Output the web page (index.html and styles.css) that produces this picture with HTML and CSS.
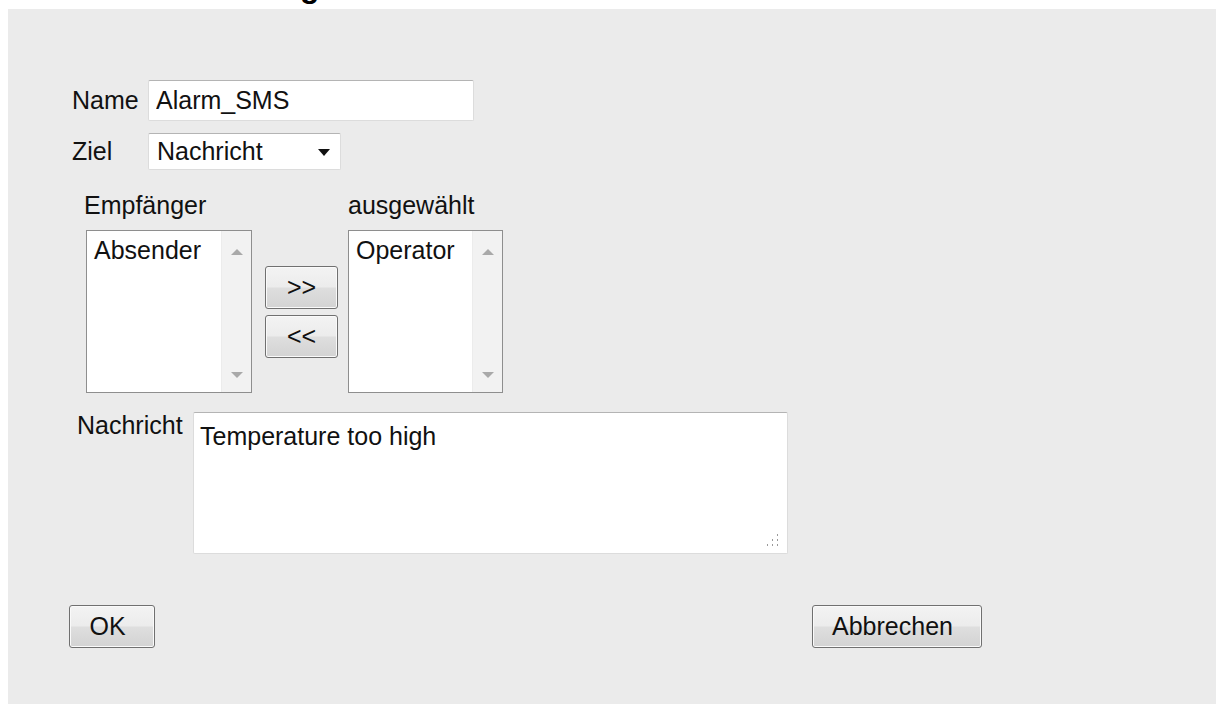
FILE: index.html
```html
<!DOCTYPE html>
<html lang="de">
<head>
<meta charset="utf-8">
<title>Alarmierung</title>
<link rel="stylesheet" href="styles.css">
</head>
<body>
<header class="title">
  <h1>Alarmierung</h1>
</header>

<main class="panel">
  <form class="dialog">
    <div class="fields">
      <label class="field-label" for="name">Name</label>
      <input class="text-input" id="name" type="text" value="Alarm_SMS">

      <label class="field-label" for="ziel">Ziel</label>
      <div class="select-box" id="ziel">
        <span class="select-value">Nachricht</span>
        <svg class="select-arrow" width="12" height="7" viewBox="0 0 12 7"><path d="M0 0h12L6 7z" fill="#111"/></svg>
      </div>
    </div>

    <div class="transfer">
      <span class="pane-label pane-label-source">Empfänger</span>
      <span class="pane-label pane-label-target">ausgewählt</span>

      <div class="listbox listbox-source">
        <ul class="list-items">
          <li>Absender</li>
        </ul>
        <div class="scroll-track">
          <svg width="12" height="6" viewBox="0 0 12 6"><path d="M0 6L6 0l6 6z" fill="#a9a9a9"/></svg>
          <svg width="12" height="6" viewBox="0 0 12 6"><path d="M0 0h12L6 6z" fill="#a9a9a9"/></svg>
        </div>
      </div>

      <div class="shuttle">
        <button type="button" class="btn btn-shuttle">&gt;&gt;</button>
        <button type="button" class="btn btn-shuttle">&lt;&lt;</button>
      </div>

      <div class="listbox listbox-target">
        <ul class="list-items">
          <li>Operator</li>
        </ul>
        <div class="scroll-track">
          <svg width="12" height="6" viewBox="0 0 12 6"><path d="M0 6L6 0l6 6z" fill="#a9a9a9"/></svg>
          <svg width="12" height="6" viewBox="0 0 12 6"><path d="M0 0h12L6 6z" fill="#a9a9a9"/></svg>
        </div>
      </div>
    </div>

    <div class="message-row">
      <label class="message-label" for="nachricht">Nachricht</label>
      <div class="textarea-wrap">
        <textarea class="message-input" id="nachricht">Temperature too high</textarea>
        <svg class="resize-grip" width="14" height="15" viewBox="0 0 14 15">
          <g fill="#9a9a9a">
            <rect x="12" y="1" width="1" height="2"/>
            <rect x="7" y="6" width="1" height="2"/>
            <rect x="12" y="6" width="1" height="2"/>
            <rect x="2" y="11" width="1" height="2"/>
            <rect x="7" y="11" width="1" height="2"/>
            <rect x="12" y="11" width="1" height="2"/>
          </g>
        </svg>
      </div>
    </div>

    <div class="actions">
      <button type="button" class="btn btn-action btn-ok">OK</button>
      <button type="button" class="btn btn-action btn-cancel">Abbrechen</button>
    </div>
  </form>
</main>
</body>
</html>
```

FILE: styles.css
```css
html,
body {
  margin: 0;
  background: #ffffff;
}

body {
  font-family: "Liberation Sans", Arial, sans-serif;
  font-size: 25px;
  line-height: 29px;
  color: #111111;
}

/* Page heading: only its descenders reach into the window */
.title {
  height: 9px;
  overflow: hidden;
}

.title h1 {
  margin: -30px 0 0 131px;
  font-size: 32px;
  line-height: 32px;
  font-weight: bold;
  color: #000000;
}

/* Grey dialog surface */
.panel {
  margin-left: 8px;
  min-height: 695px;
  background: #ebebeb;
  padding-top: 71px;
  box-sizing: border-box;
}

.dialog {
  margin: 0;
}

/* Name / Ziel */
.fields {
  display: grid;
  grid-template-columns: 76px auto;
  row-gap: 12px;
  align-items: center;
  justify-content: start;
  margin-left: 64px;
}

.field-label {
  white-space: nowrap;
}

.text-input,
.select-box,
.message-input {
  box-sizing: border-box;
  background: #ffffff;
  border: 1px solid #dcdcdc;
  border-top-color: #b4b4b4;
  border-radius: 2px;
  font: inherit;
  color: #111111;
}

.text-input {
  width: 326px;
  height: 41px;
  padding: 0 7px;
  margin: 0;
  outline: none;
}

.select-box {
  position: relative;
  width: 193px;
  height: 37px;
  padding: 0 8px;
  display: flex;
  align-items: center;
}

.select-arrow {
  position: absolute;
  right: 10px;
  top: 15px;
}

/* Empfänger / ausgewählt transfer lists */
.transfer {
  display: grid;
  grid-template-columns: 166px auto 155px;
  grid-template-rows: auto 163px;
  row-gap: 10px;
  justify-content: start;
  margin: 21px 0 0 78px;
}

.pane-label {
  grid-row: 1;
  white-space: nowrap;
}

.pane-label-source {
  grid-column: 1;
  margin-left: -2px;
}

.pane-label-target {
  grid-column: 3;
}

.listbox {
  grid-row: 2;
  display: flex;
  box-sizing: border-box;
  background: #ffffff;
  border: 1px solid #8e8e8e;
}

.listbox-source {
  grid-column: 1;
}

.listbox-target {
  grid-column: 3;
}

.list-items {
  flex: 1;
  margin: 0;
  padding: 5px 0 0 7px;
  list-style: none;
}

.scroll-track {
  width: 29px;
  background: #f2f2f2;
  border-left: 1px solid #ececec;
  display: flex;
  flex-direction: column;
  align-items: center;
  justify-content: space-between;
  padding: 18px 0 14px;
}

.shuttle {
  grid-row: 2;
  grid-column: 2;
  align-self: center;
  display: flex;
  flex-direction: column;
  gap: 6px;
  margin: 0 10px 0 13px;
}

/* Classic raised push buttons */
.btn {
  box-sizing: border-box;
  font: inherit;
  color: #111111;
  border: 1px solid #707070;
  border-radius: 3px;
  box-shadow: inset 0 0 0 1px #fafafa;
  background: linear-gradient(#f3f3f3 0%, #ececec 48%, #dedede 52%, #d3d3d3 100%);
  padding: 0;
  margin: 0;
  cursor: default;
}

.btn-shuttle {
  width: 73px;
  height: 43px;
}

/* Nachricht */
.message-row {
  display: flex;
  align-items: flex-start;
  margin: 18px 0 0 69px;
}

.message-label {
  width: 116px;
  flex: none;
}

.textarea-wrap {
  position: relative;
  margin-top: 1px;
}

.message-input {
  display: block;
  width: 595px;
  height: 142px;
  padding: 9px 6px 8px;
  margin: 0;
  resize: none;
  outline: none;
  line-height: 29px;
}

.resize-grip {
  position: absolute;
  right: 9px;
  bottom: 6px;
}

/* OK / Abbrechen */
.actions {
  display: flex;
  gap: 657px;
  margin: 51px 0 0 61px;
}

.btn-action {
  height: 43px;
  padding-right: 9px;
}

.btn-ok {
  width: 86px;
}

.btn-cancel {
  width: 170px;
}
```
